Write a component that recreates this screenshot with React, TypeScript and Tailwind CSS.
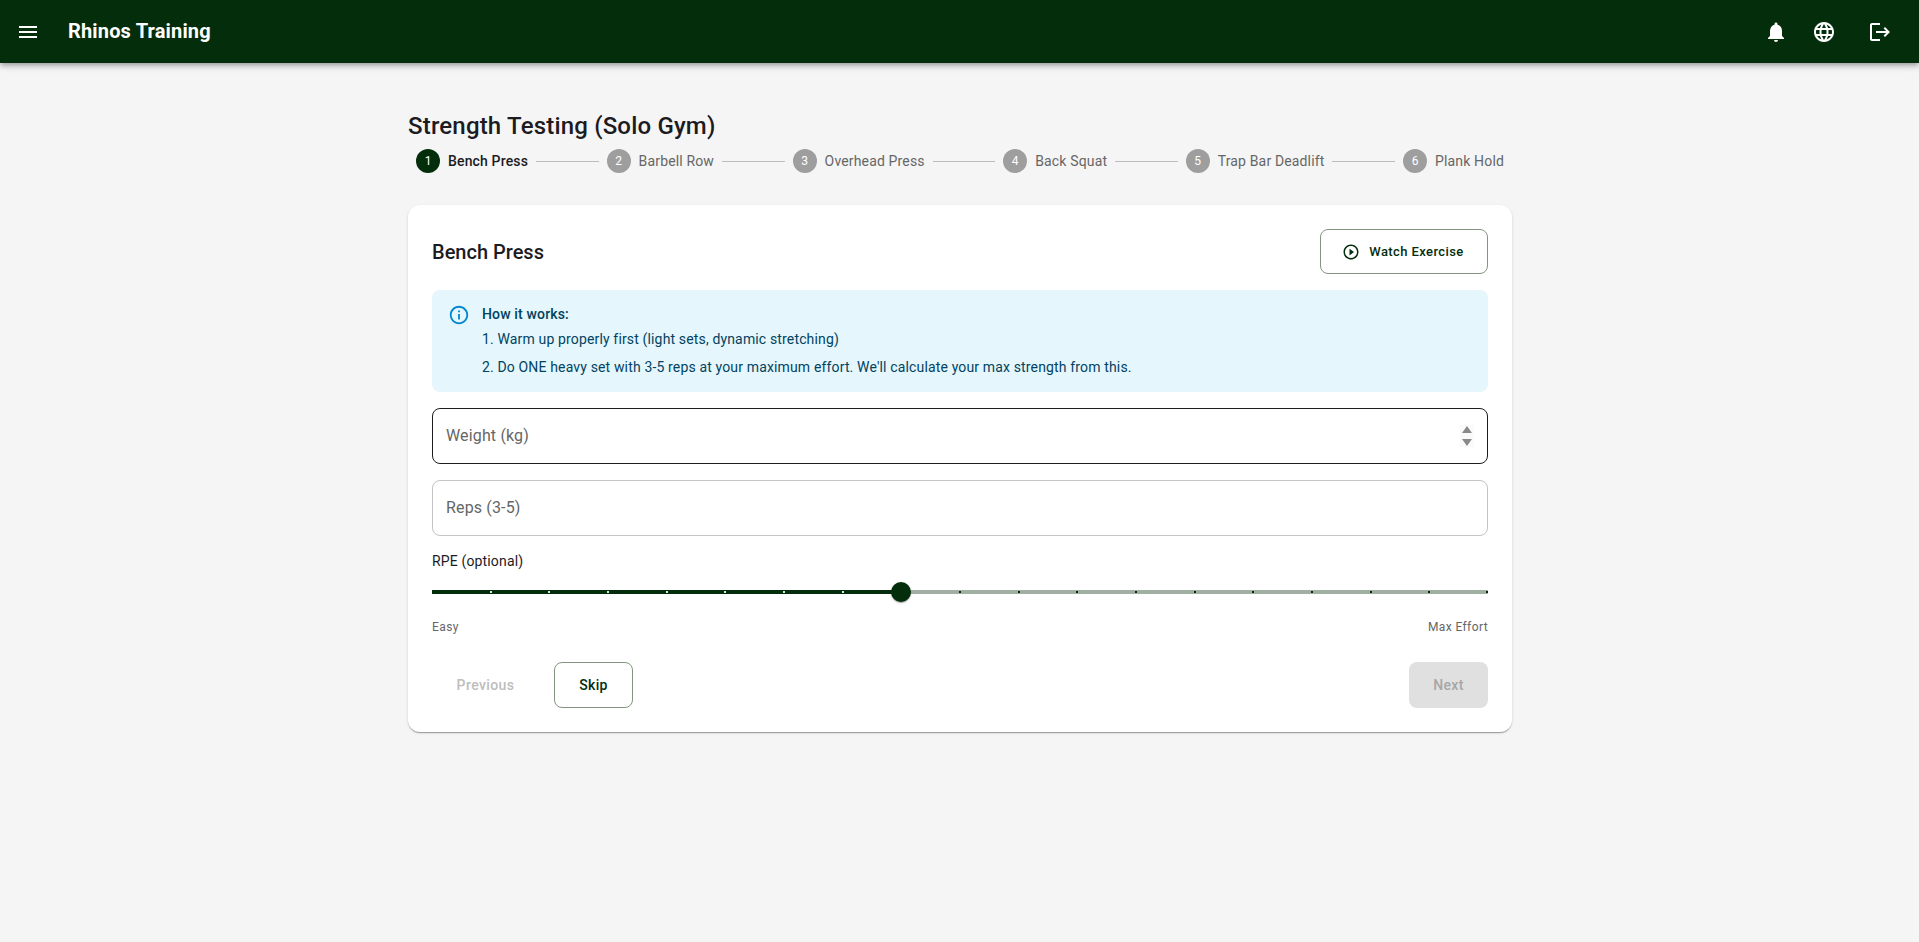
import React from 'react';
import {
  MdMenu,
  MdNotifications,
  MdLanguage,
  MdLogout,
  MdPlayCircleOutline,
  MdInfoOutline,
} from 'react-icons/md';

const steps = ['Bench Press', 'Barbell Row', 'Overhead Press', 'Back Squat', 'Trap Bar Deadlift', 'Plank Hold'];

// 1 to 10 in half steps, the thumb sits on 5
const marks = Array.from({ length: 18 }, (_, i) => i + 1);
const activeMark = 8;

function Stepper() {
  return (
    <div className="flex items-center h-6 mt-[7px]">
      {steps.map((name, i) => (
        <React.Fragment key={name}>
          {i > 0 && <div className="flex-1 h-px bg-[#bdbdbd]" />}
          <div className="flex items-center gap-2 px-2">
            <div
              className={`w-6 h-6 rounded-full flex items-center justify-center text-white text-xs ${
                i === 0 ? 'bg-[#042e0b]' : 'bg-[#9e9e9e]'
              }`}
            >
              {i + 1}
            </div>
            <span
              className={`text-sm tracking-[0.15px] whitespace-nowrap ${
                i === 0 ? 'font-medium text-[#1c1b1f]' : 'text-[#666666]'
              }`}
            >
              {name}
            </span>
          </div>
        </React.Fragment>
      ))}
    </div>
  );
}

function RpeSlider() {
  return (
    <div className="relative h-5 mt-[11px]">
      <div className="absolute left-0 right-0 top-2 h-1 bg-[#a1afa2]" />
      <div className="absolute left-0 top-2 h-1 bg-[#042e0b] w-[44.44%]" />
      {marks.map((m) => (
        <div
          key={m}
          className={`absolute top-[9px] w-0.5 h-0.5 ${m < activeMark ? 'bg-[#dfe5df]' : 'bg-[#042e0b]'}`}
          style={{ left: `calc(${(m / 18) * 100}% - ${m === 18 ? 2 : 1}px)` }}
        />
      ))}
      <div className="absolute left-[44.44%] top-0 -ml-2.5 w-5 h-5 rounded-full bg-[#042e0b] shadow-[0_2px_1px_-1px_rgba(0,0,0,0.2),0_1px_1px_0_rgba(0,0,0,0.14),0_1px_3px_0_rgba(0,0,0,0.12)]" />
    </div>
  );
}

export default function App() {
  return (
    <div className="min-h-screen bg-[#f5f5f5] font-['Roboto',sans-serif] text-[#1c1b1f]">
      <header className="h-[63px] bg-[#042e0b] text-white flex items-center pl-4 pr-[27px] shadow-[0_2px_4px_-1px_rgba(0,0,0,0.2),0_4px_5px_0_rgba(0,0,0,0.14),0_1px_10px_0_rgba(0,0,0,0.12)]">
        <MdMenu size={24} />
        <h1 className="ml-7 mb-[2px] text-xl font-bold tracking-[0.16px]">Rhinos Training</h1>
        <div className="ml-auto flex items-center">
          <MdNotifications size={24} />
          <MdLanguage size={24} className="ml-6" />
          <MdLogout size={24} className="ml-8" />
        </div>
      </header>

      <main className="w-[1104px] ml-[408px] pt-[47px]">
        <h2 className="text-2xl font-medium leading-8 tracking-[0.18px]">Strength Testing (Solo Gym)</h2>
        <Stepper />

        <section className="mt-8 bg-white rounded-xl p-6 shadow-[0_2px_1px_-1px_rgba(0,0,0,0.2),0_1px_1px_0_rgba(0,0,0,0.14),0_1px_3px_0_rgba(0,0,0,0.12)]">
          <div className="flex items-center justify-between">
            <h3 className="text-xl font-medium">Bench Press</h3>
            <button className="h-[45px] w-[168px] flex items-center justify-center gap-[9px] pr-[2px] rounded-lg border border-[#82967f] text-[#042e0b] text-[13px] font-medium tracking-[0.4px]">
              <MdPlayCircleOutline size={18} />
              Watch Exercise
            </button>
          </div>

          <div className="mt-4 flex gap-3 rounded-lg bg-[#e5f6fd] px-4 pt-3 pb-[15px] text-sm text-[#014361] tracking-[0.15px]">
            <MdInfoOutline size={22} className="text-[#0288d1] mt-[2px]" />
            <div className="pt-[2px]">
              <div className="font-medium leading-5">How it works:</div>
              <div className="mt-[5px] leading-5">1. Warm up properly first (light sets, dynamic stretching)</div>
              <div className="mt-2 leading-5">
                2. Do ONE heavy set with 3-5 reps at your maximum effort. We'll calculate your max strength from this.
              </div>
            </div>
          </div>

          <div className="mt-4 h-14 rounded-lg border border-[#1c1b1f] flex items-center justify-between pl-[13px] pr-[13px] text-base text-[#666666] tracking-[0.15px]">
            <label>Weight (kg)</label>
            <svg width="14" height="22" viewBox="-2 -1 14 22" className="text-[#8a8a8a] bg-[#fafafa]">
              <path d="M5 0 L10 7 H0 Z M0 13 H10 L5 20 Z" fill="currentColor" />
            </svg>
          </div>

          <div className="mt-4 h-14 rounded-lg border border-[#c4c4c4] flex items-center pl-[13px] text-base text-[#666666] tracking-[0.15px]">
            <label>Reps (3-5)</label>
          </div>

          <div className="mt-[15px] text-sm leading-5 tracking-[0.15px]">RPE (optional)</div>
          <RpeSlider />
          <div className="mt-[15px] flex justify-between text-xs text-[#666666] tracking-[0.4px] leading-5">
            <span>Easy</span>
            <span>Max Effort</span>
          </div>

          <div className="mt-[25px] flex items-center">
            <button className="h-[46px] w-[107px] text-sm font-medium text-[#bdbdbd] tracking-[0.4px]">Previous</button>
            <button className="ml-[15px] h-[46px] w-[79px] rounded-lg border border-[#82967f] text-sm font-medium text-[#042e0b] tracking-[0.3px]">
              Skip
            </button>
            <button className="ml-auto h-[46px] w-[79px] rounded-lg bg-[#e0e0e0] text-sm font-medium text-[#a6a6a6] tracking-[0.3px]">
              Next
            </button>
          </div>
        </section>
      </main>
    </div>
  );
}
